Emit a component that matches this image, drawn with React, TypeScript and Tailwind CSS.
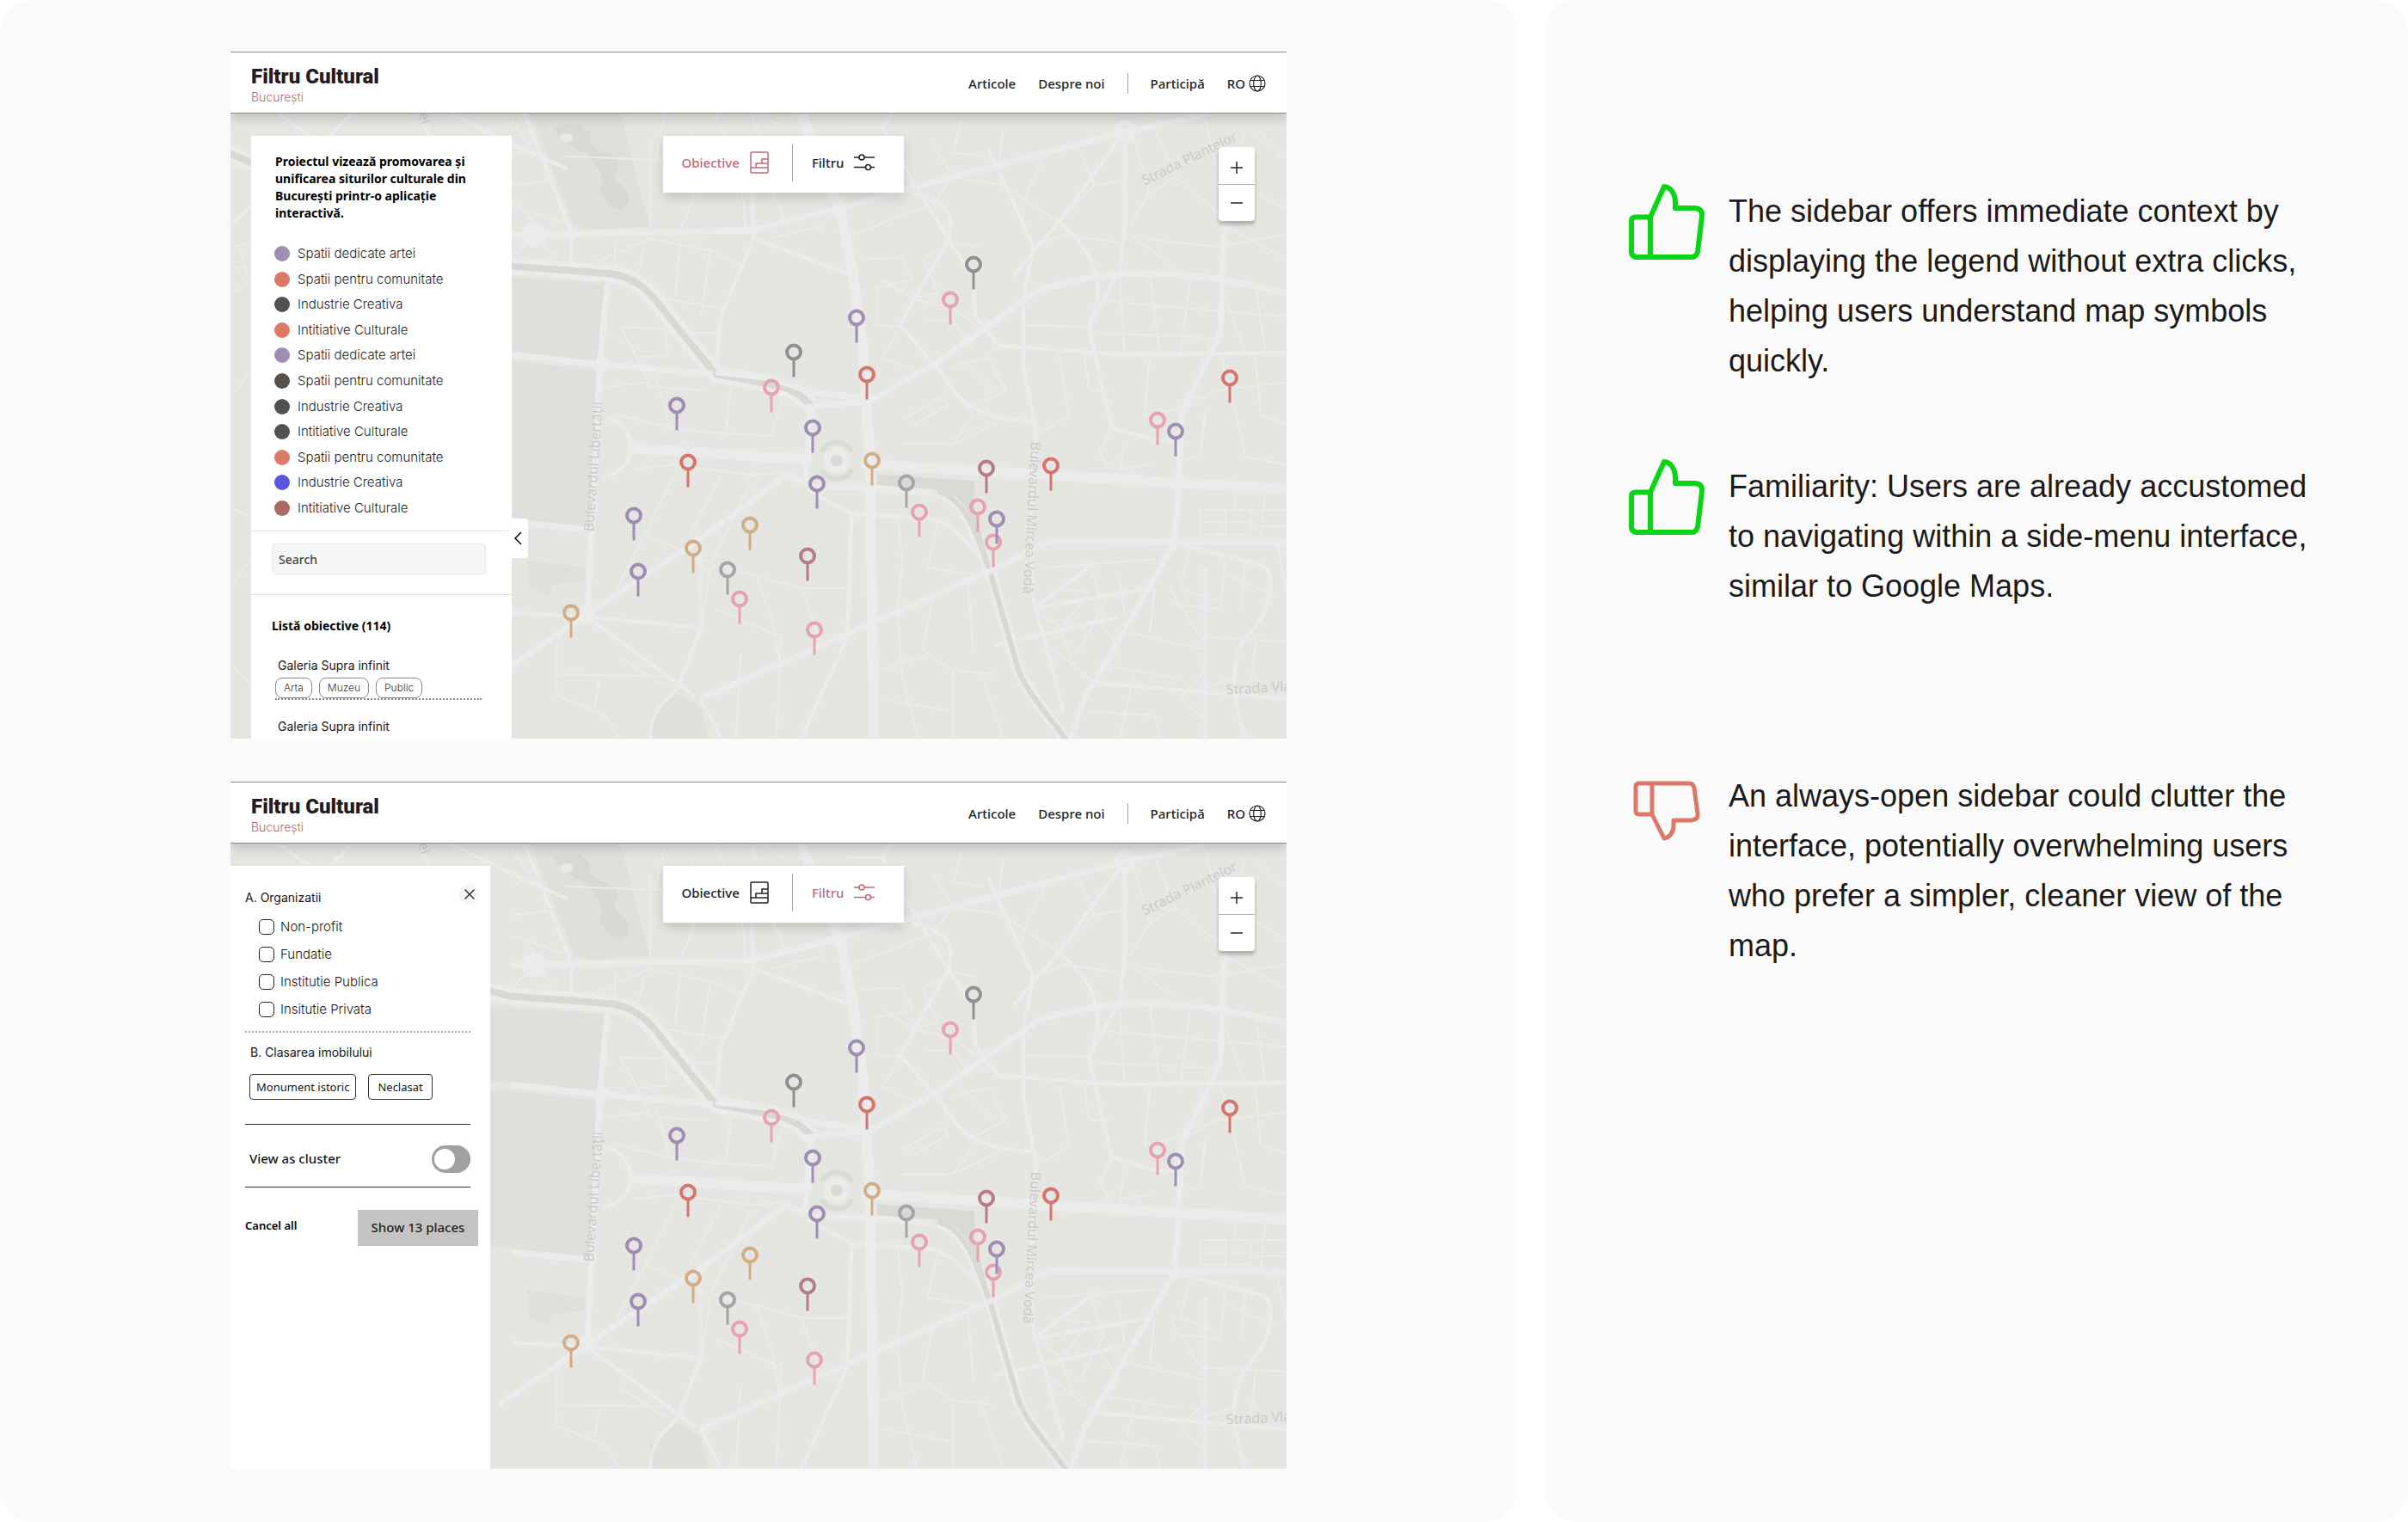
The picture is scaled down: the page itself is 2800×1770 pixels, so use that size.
import { useState, type ReactNode } from "react";

type Tab = "obiective" | "filtru";

const LEGEND = [
  { label: "Spatii dedicate artei", color: "bg-[#9f8db3]" },
  { label: "Spatii pentru comunitate", color: "bg-[#dc7868]" },
  { label: "Industrie Creativa", color: "bg-[#535152]" },
  { label: "Intitiative Culturale", color: "bg-[#dc7868]" },
  { label: "Spatii dedicate artei", color: "bg-[#9f8db3]" },
  { label: "Spatii pentru comunitate", color: "bg-[#57504f]" },
  { label: "Industrie Creativa", color: "bg-[#535152]" },
  { label: "Intitiative Culturale", color: "bg-[#535152]" },
  { label: "Spatii pentru comunitate", color: "bg-[#dc7868]" },
  { label: "Industrie Creativa", color: "bg-[#5a56e0]" },
  { label: "Intitiative Culturale", color: "bg-[#a86a62]" },
];

const ORGANIZATIONS = ["Non-profit", "Fundatie", "Institutie Publica", "Insitutie Privata"];

const PURPLE = "#9f8db3";
const PINK = "#e6a3ae";
const RED = "#d6756b";
const GRAY = "#8f9090";
const SILVER = "#a4a5a5";
const TAN = "#d3ad86";
const MAROON = "#b57c83";

const PINS: [number, number, string][] = [
  [864, 176, GRAY],
  [837, 217, PINK],
  [728, 238, PURPLE],
  [655, 278, GRAY],
  [740, 304, RED],
  [629, 319, PINK],
  [519, 340, PURPLE],
  [677, 366, PURPLE],
  [532, 406, RED],
  [746, 404, TAN],
  [682, 431, PURPLE],
  [786, 430, SILVER],
  [801, 464, PINK],
  [869, 458, PINK],
  [887, 499, PINK],
  [891, 472, PURPLE],
  [879, 413, MAROON],
  [954, 410, RED],
  [1162, 308, RED],
  [1078, 357, PINK],
  [1099, 370, PURPLE],
  [469, 468, PURPLE],
  [474, 533, PURPLE],
  [538, 506, TAN],
  [604, 479, TAN],
  [578, 531, SILVER],
  [592, 565, PINK],
  [671, 515, MAROON],
  [679, 601, PINK],
  [396, 581, TAN],
];

const PARKS = [
  "M60 25H240L300 300L185 308L150 300L75 60Z",
  "M-100 420L26 425L210 440L195 628L26 608L-100 600Z",
  "M-100 618L26 628L195 652L182 1030L26 1010L-100 1000Z",
  "M55 1112L172 1130L168 1165L110 1170L100 1200L60 1180Z",
  "M300 1545V1490L350 1435L400 1470L415 1545Z",
];

const AVENUES = [
  "M262 840L620 868M720 878L1560 940",
  "M600 25L625 110L675 255L700 400L722 600L735 860L740 1250L743 1545",
];

const MAIN_ROADS = [
  "M25 322L500 310L670 258L840 200L1150 100L1240 70L1400 30",
  "M215 440L200 640L185 1040L175 1250",
  "M735 725L870 630L1070 455C1150 425 1200 415 1290 415S1480 440 1560 462",
  "M0 1390L180 1240L400 1060L570 905L610 925",
  "M400 1450L640 1320L740 1265L970 1140C1020 1120 1050 1080 1100 1065L1560 1070",
  "M1130 1560L1160 1450L1340 1070L1355 750L1430 560L1440 280",
  "M25 1020L175 1038M25 612L195 635L425 660",
  "M620 935L740 935L860 950",
  "M430 655L540 670L625 705L740 720M610 740L735 725M620 735L606 925",
];

const SIDE_ROADS = [
  "M50 25L100 180L145 320V410",
  "M215 765C262 780 262 840 262 840C262 870 240 905 208 910",
  "M780 25L760 60L830 210L900 350L940 420L945 520L990 590L1230 612L1560 608",
  "M970 110L1060 350L1040 470V650L1065 800L1055 1000L1060 1210L1120 1480",
  "M1240 70L1110 290L1020 420M1110 290C1180 360 1190 420 1185 480L1170 550L1215 790L1300 820L1350 825",
  "M1240 90V310L1230 410L1170 545",
  "M500 190L505 330L440 520L430 650M505 330L700 420",
  "M820 220C930 250 900 320 860 400L795 540L880 660C910 720 940 770 1060 775",
  "M175 1250L390 1275M175 1250L390 1445M175 1250L25 1240",
  "M300 1545C300 1470 340 1450 355 1420L400 1280V1060",
  "M400 1450L440 1545M610 940L700 1000L690 1300L600 1545",
  "M700 1000L850 1010C900 1020 920 1060 980 1140",
  "M1340 1070L1500 1120C1560 1130 1520 1260 1480 1300C1450 1360 1450 1440 1480 1545",
  "M980 1320L1230 1250M1180 1410L1560 1450M1400 1130V1545M1180 1120L1060 1230L1290 1180",
];

const LANES = [
  "M130 130L330 140L480 110M300 100V300M380 60L395 200L360 310M430 30L480 190L490 310M330 25L310 140",
  "M150 410L300 330L420 360L490 400M230 340V420M290 350L270 440M360 330L350 470M420 355L400 520M300 470L440 500M330 560L440 560",
  "M240 545L330 550L335 615L275 620L240 545M265 600L300 690L410 700M215 690L300 680M310 660L340 790L240 760M340 790L400 800L540 810L560 720M460 690L450 800",
  "M270 890L350 880L500 905L560 900M350 900L290 1050L235 1180M440 905L380 1050M500 920L420 1120M290 1050L420 1120L600 1180L690 1180",
  "M420 1125L400 1290M510 1150L540 1250L560 1380M600 1180L640 1320M430 1230L560 1300M560 1290L550 1545M480 1340L470 1545M115 1390L340 1395M115 1310V1440L210 1490L240 1545M200 1400L190 1470M240 1350L330 1420",
  "M790 1000L800 1120L790 1230M870 1020L850 1130L960 1150M790 1230L800 1400L830 1545M860 1200L840 1330L900 1380L980 1390M900 1380L900 1545M760 1380L830 1350M960 1400L1000 1545M760 1450L900 1480M930 1160L940 1330",
  "M720 380L800 378L820 430L750 450V540L800 545M760 430L830 480L900 500M840 380L870 460L810 480M850 530L900 530L940 600M840 380L900 340L950 350M790 560L760 620L820 650M900 500L970 560",
  "M900 640L970 620L1005 700L930 745L880 670M930 640L980 700M800 770L880 715L890 735L820 785M800 830L900 830L985 780M940 760L900 830",
  "M1060 350L1120 320L1230 340M1110 290L1060 250L1000 200L900 180M860 100L900 180L860 250M1000 60L990 160M920 40L900 120L960 130M1080 130L1040 240M1150 110L1180 200L1110 290M1180 200L1230 190",
  "M1260 90L1290 220L1250 300M1300 60L1340 180L1440 280M1340 180L1280 230M1400 40L1420 150L1500 200M1480 60L1450 180L1560 260M1500 60L1550 130M1280 330L1420 350L1560 320M1250 320L1340 400M1440 300L1560 380",
  "M1230 410L1240 610M1290 415L1310 610M1370 430L1350 620M1430 440L1480 610M1500 450L1520 610M1180 480L1560 520M1185 560L1400 570M1040 540L1170 545",
  "M1110 610L1130 760L1080 800M1160 610L1170 700L1210 700M1215 790L1190 850L1210 890M1290 620L1280 760L1350 740M1360 740L1420 700L1560 680M1430 610L1450 700M1500 620L1510 760L1560 780M1400 750L1390 860L1360 870M1450 700L1480 860L1560 880M1240 830L1230 890L1290 880",
  "M1390 990H1490V1050H1390ZM1390 1020H1490M1440 990V1050M1500 990H1560M1500 1030H1560M1520 940L1510 1060M1460 950V990",
  "M1080 1130L1300 1110M1090 1180L1170 1190L1120 1270M1170 1120L1200 1220L1150 1330M1230 1150L1240 1240M1070 1240L1110 1270L1140 1370M1190 1260L1230 1330L1170 1420M1370 1090L1350 1180L1420 1210M1440 1110L1430 1230L1340 1220M1330 1180L1390 1300L1560 1310M1450 1150L1540 1200M1480 1120L1470 1230M1540 1060L1560 1180",
  "M1250 1290L1400 1330M1300 1180L1290 1290M1210 1370L1350 1400M1170 1480L1300 1490L1310 1545M1260 1390L1230 1545M1400 1380L1350 1450L1400 1500M1400 1420L1450 1400M1500 1310L1490 1420M1090 1320L1180 1410",
  "M25 40L90 150M25 130L60 110M25 250L145 300M25 200L100 190M30 370L70 325L110 370M70 290L40 250M500 30L530 110L590 120M520 25L560 60M690 60L760 60M700 130L780 110M560 130L640 190M540 210L570 290M540 330L640 300M700 320L850 250",
];

const RIVER = "M-540 120L-330 230L-200 330L26 398L145 408L215 415C270 420 300 460 330 510L430 660L540 685C580 695 600 710 620 738";
const CANAL = "M870 945C925 965 945 1040 975 1145L1030 1380C1050 1440 1090 1490 1125 1550";

// Streets are traced on a 1568-unit grid that is stretched over the visible area.
function CityMap() {
  return (
    <svg
      className="absolute inset-0 h-full w-full"
      viewBox="0 0 1228 728"
      preserveAspectRatio="xMidYMid slice"
      aria-label="Harta București"
    >
      <rect width="1228" height="728" fill="#e5e6e2" />
      <g transform="translate(312 -12) scale(0.5867 0.4783)" fill="none" strokeLinejoin="round">
        {PARKS.map((d) => (
          <path key={d} d={d} fill="#dfe0db" />
        ))}
        <path
          d="M110 60C150 40 190 60 180 100C210 130 240 120 235 160C215 190 260 200 258 235C245 280 215 250 200 215C215 180 195 160 180 130C160 110 120 100 110 60Z"
          fill="#d7d9d3"
        />
        <ellipse cx="134" cy="85" rx="13" ry="11" fill="#e9e9e7" />
        <g stroke="#ebebeb">
          {LANES.map((d) => (
            <path key={d} d={d} strokeWidth="2" vectorEffect="non-scaling-stroke" />
          ))}
          {SIDE_ROADS.map((d) => (
            <path key={d} d={d} strokeWidth="4" vectorEffect="non-scaling-stroke" />
          ))}
          <path d={RIVER} strokeWidth="20" vectorEffect="non-scaling-stroke" />
          <path d={CANAL} strokeWidth="14" vectorEffect="non-scaling-stroke" />
          <path d={RIVER} strokeWidth="8" stroke="#d7d9d2" vectorEffect="non-scaling-stroke" />
          <path d={CANAL} strokeWidth="6" stroke="#d7d9d2" vectorEffect="non-scaling-stroke" />
          <path
            d="M750 903L943 920V985L972 1120L955 1090C940 1010 925 940 850 938L750 933Z"
            fill="#d8dad4"
            stroke="none"
          />
          {MAIN_ROADS.map((d) => (
            <path key={d} d={d} strokeWidth="7" vectorEffect="non-scaling-stroke" />
          ))}
          {AVENUES.map((d) => (
            <path key={d} d={d} strokeWidth="12" vectorEffect="non-scaling-stroke" />
          ))}
        </g>
      </g>
      <g fill="none" stroke="#ebebeb" strokeWidth="4">
        <path d="M55 0L92 27L140 70M142 0L115 27L0 130M218 0L232 27M255 0L325 35L355 48L392 65" />
        <path
          strokeWidth="2"
          d="M0 155L24 152M0 180H24M10 155L20 190M0 330L24 300M0 550L24 520M0 640L24 665M0 210L24 195M0 460L24 470"
        />
        <circle cx="1040" cy="21" r="10" strokeWidth="7" />
      </g>
      <g fill="#ebebeb">
        <circle cx="353" cy="142" r="14" />
        <circle cx="708" cy="112" r="9" />
        <circle cx="414" cy="583" r="10" />
        <circle cx="432" cy="292" r="9" />
      </g>
      <g fill="none" stroke="#d9dbd5">
        <path d="M687 394A20 20 0 0 1 723 394M687 414A20 20 0 0 0 723 414" strokeWidth="6" />
        <circle cx="705" cy="404" r="11" fill="#d9dbd5" stroke="#ebebeb" strokeWidth="8" />
      </g>

      <g fill="#c9cbc8" fontFamily="'Noto Sans', sans-serif" fontSize="16">
        <text transform="translate(1063 84) rotate(-26)">Strada Plantelor</text>
        <text transform="translate(422 487) rotate(-86)">Bulevardul Libertății</text>
        <text transform="translate(931 382) rotate(93)">Bulevardul Mircea Vodă</text>
        <text transform="translate(1158 676) rotate(-3)">Strada Vlaicu</text>
        <text transform="translate(216 -6) rotate(72)">zei</text>
      </g>

      {PINS.map(([x, y, color]) => (
        <g key={`${x}-${y}`} fill="none" stroke={color}>
          <path d={`M${x} ${y + 9}V${y + 29}`} strokeWidth="3" />
          <circle cx={x} cy={y} r="8" strokeWidth="4" />
        </g>
      ))}
    </svg>
  );
}

function Globe() {
  return (
    <svg className="size-5" viewBox="0 0 20 20" fill="none" stroke="currentColor" strokeWidth="1.2">
      <circle cx="10" cy="10" r="9" />
      <ellipse cx="10" cy="10" rx="4.3" ry="9" />
      <path d="M2.2 6.5H17.8M2.2 13.5H17.8" />
    </svg>
  );
}

function BlocksIcon() {
  return (
    <svg className="h-[26px] w-[22px]" viewBox="0 0 22 26" fill="none" stroke="currentColor" strokeWidth="1.5">
      <rect x="1" y="1" width="20" height="24" rx="1" />
      <path d="M1 19H21M7 19V14H21M14 14V9H21" />
    </svg>
  );
}

function SlidersIcon() {
  return (
    <svg className="h-5 w-6" viewBox="0 0 24 20" fill="none" stroke="currentColor" strokeWidth="1.6">
      <path d="M0 4H6M12 4H24M0 15.5H13.5M19.5 15.5H24" />
      <circle cx="9" cy="4" r="3" />
      <circle cx="16.5" cy="15.5" r="3" />
    </svg>
  );
}

function Header() {
  return (
    <header className="relative z-10 flex h-[72px] items-center justify-between border-y border-[#8b8b8b] bg-white px-6 pt-0.5 shadow-[0_6px_12px_rgba(0,0,0,0.16)]">
      <div>
        <h1 className="font-[Roboto,sans-serif] text-2xl leading-8 font-black text-[#261b20]">Filtru Cultural</h1>
        <p className="font-[Inter,sans-serif] text-sm leading-4 font-light text-[#b96570]">București</p>
      </div>
      <nav className="flex items-center gap-[26px] text-[15px] font-medium text-[#232323]">
        <a href="#articole">Articole</a>
        <a href="#despre">Despre noi</a>
        <span className="h-6 w-px bg-[#a0a0a0]" />
        <a href="#participa">Participă</a>
        <button type="button" className="flex items-center gap-1">
          RO
          <Globe />
        </button>
      </nav>
    </header>
  );
}

function Toolbar({ active, onSelect }: { active: Tab; onSelect: (tab: Tab) => void }) {
  const tone = (tab: Tab) => (tab === active ? "text-[#bd6b75]" : "text-[#232323]");

  return (
    <div className="absolute top-[26px] left-[41%] flex h-[66px] w-[280px] items-center bg-white pb-1 pl-[21px] text-[15px] font-medium shadow-[0_6px_12px_rgba(0,0,0,0.14)]">
      <button
        type="button"
        onClick={() => onSelect("obiective")}
        className={`flex items-center gap-3 ${tone("obiective")}`}
      >
        Obiective
        <BlocksIcon />
      </button>
      <span className="mr-[22px] ml-[27px] h-11 w-px bg-[#a8a8a8]" />
      <button
        type="button"
        onClick={() => onSelect("filtru")}
        className={`flex items-center gap-3 ${tone("filtru")}`}
      >
        Filtru
        <SlidersIcon />
      </button>
    </div>
  );
}

function ZoomControl() {
  return (
    <div className="absolute top-[39px] right-[37px] flex w-[42px] flex-col rounded-sm bg-white text-[#232323] shadow-[0_4px_4px_rgba(0,0,0,0.25)]">
      <button
        type="button"
        aria-label="Zoom in"
        className="flex h-11 items-center justify-center border-b border-[#b5b5b5] pt-1"
      >
        <svg className="size-[14px]" viewBox="0 0 14 14" stroke="currentColor" strokeWidth="1.5">
          <path d="M0 7H14M7 0V14" />
        </svg>
      </button>
      <button type="button" aria-label="Zoom out" className="flex h-[42px] items-center justify-center">
        <svg className="size-[14px]" viewBox="0 0 14 14" stroke="currentColor" strokeWidth="1.5">
          <path d="M0 7H14" />
        </svg>
      </button>
    </div>
  );
}

function Chip({ children }: { children: ReactNode }) {
  return (
    <span className="flex h-6 items-center rounded-lg border border-[#8a8a8a] px-[9px] text-xs font-light text-[#333]">
      {children}
    </span>
  );
}

function ObjectivesPanel() {
  return (
    <aside className="relative ml-6 h-[702px] w-[303px] bg-white font-[Inter,sans-serif]">
      <p className="px-7 pt-5 font-['Noto_Sans',sans-serif] text-sm leading-5 font-bold text-black">
        Proiectul vizează promovarea și unificarea siturilor culturale din București printr-o aplicație interactivă.
      </p>
      <ul className="mt-[27px] flex h-[316px] flex-col justify-between pl-[27px] text-[15px] leading-5 font-light text-[#1d1d1d]">
        {LEGEND.map((item, i) => (
          <li key={`${item.label}-${i}`} className="flex items-center gap-[9px]">
            <span className={`size-[18px] rounded-full ${item.color}`} />
            {item.label}
          </li>
        ))}
      </ul>
      <div className="mt-4 border-y border-[#dedede] px-6 pt-[14px] pb-[23px]">
        <input
          type="text"
          placeholder="Search"
          aria-label="Search"
          className="h-9 w-[249px] rounded-sm border border-[#e9e9e9] bg-[#f6f6f6] px-[7px] font-['Noto_Sans',sans-serif] text-sm font-medium placeholder:text-[#444]"
        />
      </div>
      <h2 className="mt-[26px] pl-6 font-['Noto_Sans',sans-serif] text-sm leading-5 font-bold text-black">
        Listă obiective (114)
      </h2>
      {[0, 1].map((n) => (
        <article
          key={n}
          className="mr-[35px] ml-7 border-b-2 border-dotted border-[#8a8a8a] pt-[21px] first-of-type:pt-[26px]"
        >
          <h3 className="pl-[3px] text-sm leading-5 text-[#161616]">Galeria Supra infinit</h3>
          <div className="mt-1 flex gap-2">
            <Chip>Arta</Chip>
            <Chip>Muzeu</Chip>
            <Chip>Public</Chip>
          </div>
        </article>
      ))}
      <button
        type="button"
        aria-label="Collapse panel"
        className="absolute top-[445px] -right-[19px] flex h-[46px] w-[23px] items-center justify-center rounded-r-sm bg-white text-black"
      >
        <svg className="h-4 w-[9px]" viewBox="0 0 9 16" fill="none" stroke="currentColor" strokeWidth="1.5">
          <path d="M8 1L1 8L8 15" />
        </svg>
      </button>
    </aside>
  );
}

function FiltersPanel() {
  const [cluster, setCluster] = useState(false);

  return (
    <aside className="h-[702px] w-[302px] bg-white pr-6 pl-[17px] font-[Inter,sans-serif] text-sm text-[#161616]">
      <div className="flex items-start justify-between pt-[21px]">
        <h2 className="pt-[6px] leading-5">A. Organizatii</h2>
        <button
          type="button"
          aria-label="Close"
          className="-mr-3 flex size-6 items-center justify-center rounded-full bg-[#f6f6f6] text-[#333]"
        >
          <svg className="size-3" viewBox="0 0 12 12" stroke="currentColor" strokeWidth="1.5">
            <path d="M0.5 0.5L11.5 11.5M11.5 0.5L0.5 11.5" />
          </svg>
        </button>
      </div>
      <ul className="mt-[14px] flex flex-col gap-3 pl-4 text-[15px] font-light">
        {ORGANIZATIONS.map((name) => (
          <li key={name}>
            <label className="flex items-center gap-[7px] leading-5">
              <input
                type="checkbox"
                className="size-[18px] appearance-none rounded-[5px] border border-[#222] checked:bg-[#bd6b75]"
              />
              {name}
            </label>
          </li>
        ))}
      </ul>
      <div className="-mr-px mt-[15px] border-t-2 border-dotted border-[#b0b0b0]" />
      <h2 className="mt-[13px] pl-[6px] leading-5">B. Clasarea imobilului</h2>
      <div className="mt-[15px] flex gap-[14px] pl-[5px] font-['Noto_Sans',sans-serif] text-[13px]">
        <button type="button" className="h-[30px] rounded-sm border border-[#333] px-[7px]">
          Monument istoric
        </button>
        <button type="button" className="h-[30px] rounded-sm border border-[#333] px-[10px]">
          Neclasat
        </button>
      </div>
      <label className="mt-7 -mr-px flex h-[74px] items-center justify-between border-y border-[#2c2427] pt-2 pl-[5px] font-['Noto_Sans',sans-serif] text-[15px] font-medium">
        View as cluster
        <input
          type="checkbox"
          role="switch"
          checked={cluster}
          onChange={(e) => setCluster(e.target.checked)}
          className="h-8 w-[45px] appearance-none rounded-full bg-[#9fa1a0] px-[3px] py-1 before:block before:size-6 before:rounded-full before:bg-white checked:before:ml-auto"
        />
      </label>
      <div className="-mr-[10px] mt-[26px] flex items-start justify-between font-['Noto_Sans',sans-serif]">
        <button type="button" className="pt-[9px] text-[13px] font-semibold text-black">
          Cancel all
        </button>
        <button type="button" className="h-[42px] w-[140px] bg-[#c4c4c4] text-[15px] font-medium text-[#232323]">
          Show 13 places
        </button>
      </div>
    </aside>
  );
}

function Screen({ tab, onSelect, children }: { tab: Tab; onSelect: (tab: Tab) => void; children: ReactNode }) {
  return (
    <section className="mx-auto w-full max-w-[1228px] overflow-hidden font-['Noto_Sans',sans-serif]">
      <Header />
      <div className="relative overflow-hidden">
        <CityMap />
        <div className="relative h-[727px] pt-[26px]">{children}</div>
        <Toolbar active={tab} onSelect={onSelect} />
        <ZoomControl />
      </div>
    </section>
  );
}

function ThumbUp() {
  return (
    <svg className="size-[88px]" viewBox="0 0 88 88" fill="none" stroke="#0bd318" strokeWidth="6" strokeLinejoin="round">
      <path d="M25 38.5L41 3C49 3.5 54 12 54 21V28H77Q86 29 85 37L80 79Q78 85 73 85H8Q3 84 3 79V43Q3 38.5 8 38.5H25V85" />
    </svg>
  );
}

function ThumbDown() {
  return (
    <svg
      className="mt-[14px] h-[70px] w-[78px]"
      viewBox="0 0 78 70"
      fill="none"
      stroke="#dc7868"
      strokeWidth="5"
      strokeLinejoin="round"
    >
      <path d="M22 39L36 67C43 66 47 59 47 52V46H68Q76 45 75 38L71 8Q70 3 65 3H7Q3 3 3 7V35Q3 39 7 39H22V3" />
    </svg>
  );
}

function Note({ icon, className, children }: { icon: ReactNode; className?: string; children: ReactNode }) {
  return (
    <li className={`flex gap-7 ${className ?? ""}`}>
      <div className="flex w-[88px] shrink-0 items-start justify-center">{icon}</div>
      <p className="pt-[3px] text-4xl leading-[58px] text-[#1b1b1b]">{children}</p>
    </li>
  );
}

export default function App() {
  const [first, setFirst] = useState<Tab>("obiective");
  const [second, setSecond] = useState<Tab>("filtru");

  return (
    <main className="grid min-h-screen grid-cols-[1764fr_1004fr] gap-8 bg-white">
      <div className="flex flex-col gap-[50px] rounded-[36px] bg-[#fafafa] pt-[60px] pb-[62px]">
        <Screen tab={first} onSelect={setFirst}>
          <ObjectivesPanel />
        </Screen>
        <Screen tab={second} onSelect={setSecond}>
          <FiltersPanel />
        </Screen>
      </div>
      <ul className="rounded-[36px] bg-[#fafafa] pt-[214px] pr-[100px] pl-[98px] font-['Liberation_Sans',Arial,sans-serif]">
        <Note icon={<ThumbUp />}>
          The sidebar offers immediate context by displaying the legend without extra clicks, helping users understand
          map symbols quickly.
        </Note>
        <Note icon={<ThumbUp />} className="mt-[85px]">
          Familiarity: Users are already accustomed to navigating within a side-menu interface, similar to Google Maps.
        </Note>
        <Note icon={<ThumbDown />} className="mt-[183px]">
          An always-open sidebar could clutter the interface, potentially overwhelming users who prefer a simpler,
          cleaner view of the map.
        </Note>
      </ul>
    </main>
  );
}
